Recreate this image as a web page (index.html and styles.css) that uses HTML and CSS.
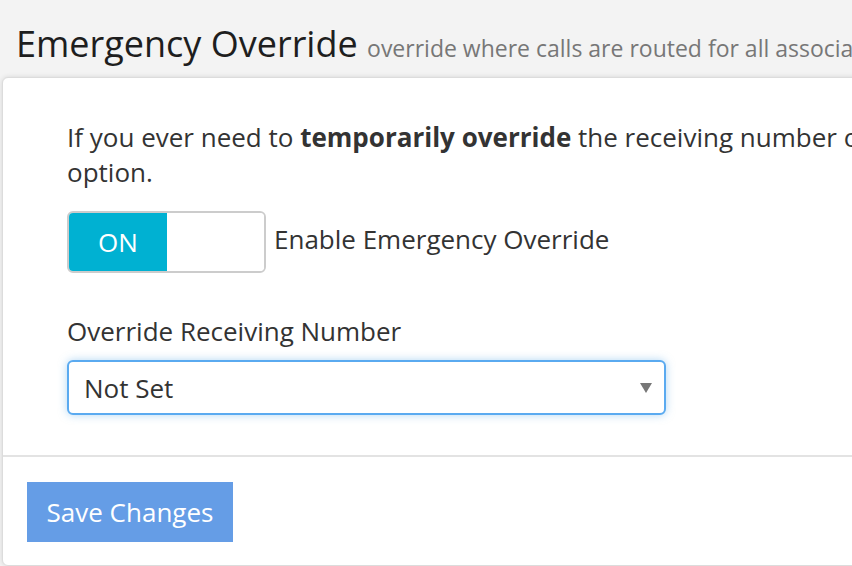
FILE: index.html
```html
<!DOCTYPE html>
<html lang="en">
<head>
    <meta charset="UTF-8">
    <title>Emergency Override</title>
    <meta name="viewport" content="width=device-width, initial-scale=1.0">
    <link rel="stylesheet" href="styles.css">
</head>
<body>

<div class="page-header">
    <h1>Emergency Override <small>override where calls are routed for all associated numbers</small></h1>
</div>

<div class="panel">
    <div class="panel-body">
        <p class="intro">If you ever need to <strong>temporarily override</strong> the receiving number of your calls, you can use this<br>option.</p>

        <div class="toggle-row">
            <div class="toggle">
                <span class="toggle-on">ON</span>
                <span class="toggle-off"></span>
            </div>
            <span class="toggle-label">Enable Emergency Override</span>
        </div>

        <label for="overrideNumber">Override Receiving Number</label>
        <div class="select-wrap">
            <select id="overrideNumber">
                <option>Not Set</option>
            </select>
            <span class="caret"></span>
        </div>
    </div>
    <div class="panel-footer">
        <button type="button">Save Changes</button>
    </div>
</div>

</body>
</html>
```

FILE: styles.css
```css
html, body {
    margin: 0;
    padding: 0;
    height: 100%;
    overflow: hidden;
}

body {
    font-family: 'Open Sans', 'Liberation Sans', sans-serif;
    background: #f3f3f3;
    color: #333;
    font-size: 26px;
    line-height: 35px;
}

.page-header {
    padding: 19px 0 0 16px;
    height: 58px;
    white-space: nowrap;
}

.page-header h1 {
    margin: 0;
    font-size: 36px;
    font-weight: 400;
    line-height: 50px;
    color: #1e1e1e;
}

.page-header small {
    font-size: 23px;
    color: #777;
}

.panel {
    margin-left: 2px;
    width: 1500px;
    background: #fff;
    border: 1px solid #dcdcdc;
    border-radius: 6px;
    box-shadow: 0 0 5px rgba(0, 0, 0, 0.12);
}

.panel-body {
    padding: 42px 0 40px 64px;
    border-bottom: 2px solid #e3e3e3;
}

.intro {
    margin: 0;
    width: 1300px;
}

.toggle-row {
    display: flex;
    align-items: center;
    margin-top: 21px;
}

.toggle {
    display: flex;
    width: 195px;
    height: 58px;
    border: 2px solid #ccc;
    border-radius: 6px;
    overflow: hidden;
}

.toggle-on {
    width: 98px;
    background: #00b1d2;
    color: #fff;
    text-align: center;
    line-height: 58px;
}

.toggle-off {
    flex: 1;
    background: #fff;
}

.toggle-label {
    margin-left: 8px;
    margin-top: -6px;
}

label {
    display: block;
    margin-top: 41px;
}

.select-wrap {
    position: relative;
    width: 599px;
    margin-top: 11px;
}

select {
    display: block;
    width: 100%;
    height: 55px;
    padding: 0 15px;
    font-family: inherit;
    font-size: 26px;
    color: #333;
    background: #fff;
    border: 2px solid #5aaaf0;
    border-radius: 6px;
    box-shadow: 0 0 8px rgba(102, 175, 233, 0.5);
    -webkit-appearance: none;
    appearance: none;
    outline: none;
}

.caret {
    position: absolute;
    right: 14px;
    top: 23px;
    width: 0;
    height: 0;
    border-left: 6px solid transparent;
    border-right: 6px solid transparent;
    border-top: 10px solid #777;
}

.panel-footer {
    padding: 25px 0 23px 24px;
}

button {
    display: block;
    width: 206px;
    height: 60px;
    padding: 0;
    font-family: inherit;
    font-size: 26px;
    color: #fff;
    background: #659de6;
    border: none;
    border-radius: 0;
    cursor: pointer;
}
```
